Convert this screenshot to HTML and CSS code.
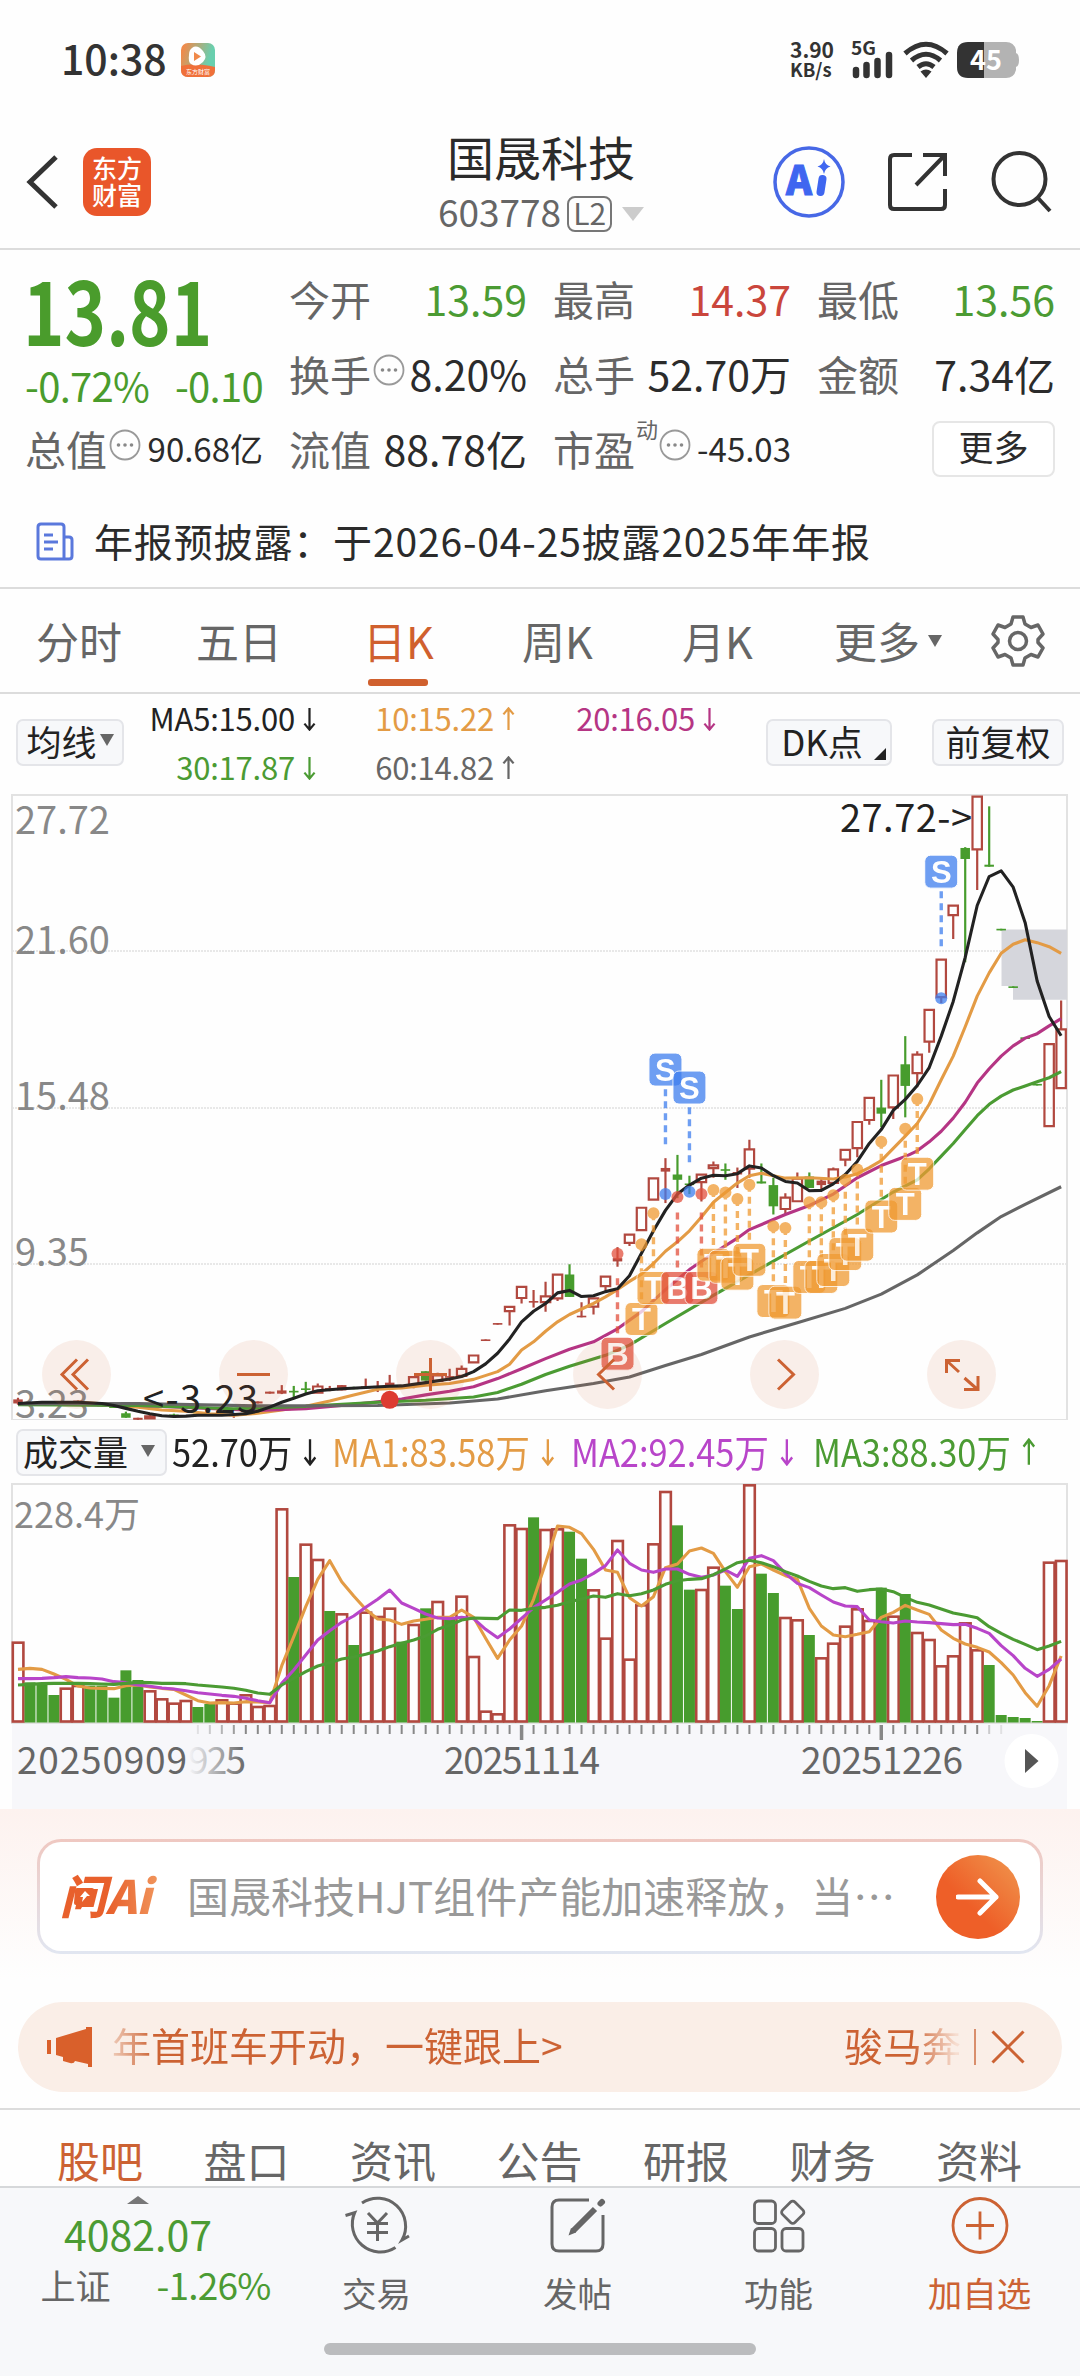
FILE: index.html
```html
<!DOCTYPE html>
<html lang="zh-CN">
<head>
    <meta charset="UTF-8">
    <title>国晟科技 603778</title>
    <link rel="stylesheet" href="styles.css">
</head>
<body>

<svg class="defs">
    <symbol id="down" viewBox="0 0 14 26"><path d="M7 1V24M1.500 18L7 24.500L12.500 18" fill="none" stroke="currentColor" stroke-width="2.400"/></symbol>
    <symbol id="up" viewBox="0 0 14 26"><path d="M7 25V2M1.500 8L7 1.500L12.500 8" fill="none" stroke="currentColor" stroke-width="2.400"/></symbol>
    <symbol id="more" viewBox="0 0 32 32"><circle cx="16" cy="16" r="14.500" fill="none" stroke="#999" stroke-width="1.800"/><circle cx="9.500" cy="16" r="1.800" fill="#888"/><circle cx="16" cy="16" r="1.800" fill="#888"/><circle cx="22.500" cy="16" r="1.800" fill="#888"/></symbol>
</svg>

<div class="status">
    <span class="clock">10:38</span>
    <svg class="app-badge" width="36" height="36" viewBox="0 0 36 36">
        <defs><linearGradient id="badge" x1="0" y1="0" x2="1" y2="0.3"><stop offset="0.1" stop-color="#f08a4b"/><stop offset="0.9" stop-color="#69cfae"/></linearGradient></defs>
        <rect x="1" y="1" width="34" height="34" rx="7" fill="url(#badge)"/>
        <path d="M1 24Q14 20 35 25V28Q35 35 28 35H8Q1 35 1 28Z" fill="#f0703a"/>
        <path d="M12 6Q17 2 23 9Q28 15 23 20Q17 26 11 22Q8 20 9 13Q9 8 12 6Z" fill="#fff"/>
        <path d="M14 10L21 14.500L14 19Z" fill="#f08a4b"/>
        <text x="18" y="32" font-size="6" text-anchor="middle" fill="#fff">东方财富</text>
    </svg>
    <div class="net"><span>3.90</span><span>KB/s</span></div>
    <svg class="signal" width="44" height="38" viewBox="0 0 44 38">
        <text x="0" y="14" font-size="18" font-weight="700" fill="#333" textLength="25" lengthAdjust="spacingAndGlyphs">5G</text>
        <path d="M5 29V34M15.500 24V34M26.500 20V34M38 14V34" stroke="#333" stroke-width="6.500" stroke-linecap="round"/>
    </svg>
    <svg class="wifi" width="46" height="38" viewBox="0 0 46 38">
        <path d="M2 12.500Q23 -6 44 12.500M8.500 19.500Q23 7 37.500 19.500M15 26Q23 19.500 31 26" fill="none" stroke="#333" stroke-width="5"/>
        <path d="M17.500 30.500Q23 26.500 28.500 30.500L23 37Z" fill="#333"/>
    </svg>
    <svg class="battery" width="64" height="38" viewBox="0 0 64 38">
        <path d="M28 1H50Q58 1 60 9V12Q63 13 63 19Q63 25 60 26V29Q58 37 50 37H28Z" fill="#b3b3b3"/>
        <path d="M28 1H12Q1 1 1 12V26Q1 37 12 37H28Z" fill="#333"/>
        <text x="30" y="29" font-size="27" font-weight="700" text-anchor="middle" fill="#fff">45</text>
    </svg>
</div>

<header class="header">
    <svg class="back" width="34" height="60" viewBox="0 0 34 60"><path d="M30 5L4 30L30 55" fill="none" stroke="#333" stroke-width="5"/></svg>
    <div class="logo">东方<br>财富</div>
    <div class="title">
        <h1>国晟科技</h1>
        <div class="code"><span>603778</span><b>L2</b><i class="tri"></i></div>
    </div>
    <div class="actions">
        <svg width="74" height="74" viewBox="0 0 74 74">
            <circle cx="37" cy="37" r="34" fill="none" stroke="#4768e6" stroke-width="3.500"/>
            <text x="14" y="50" font-size="40" font-weight="900" fill="#3f66f0" stroke="#3f66f0" textLength="26" lengthAdjust="spacingAndGlyphs">A</text>
            <path d="M50.500 34L48.500 47" stroke="#3f66f0" stroke-width="8" stroke-linecap="round"/>
            <path d="M52 14Q53 20 58.500 21.500Q53 23 52 29Q51 23 45.500 21.500Q51 20 52 14Z" fill="#3f66f0"/>
        </svg>
        <svg class="share" width="60" height="60" viewBox="0 0 60 60"><path d="M24 3H6Q2 3 2 7V53Q2 57 6 57H53Q57 57 57 53V37M35 3H57V24M57 3L28 33" fill="none" stroke="#333" stroke-width="4"/></svg>
        <svg class="search" width="62" height="62" viewBox="0 0 62 62"><circle cx="28.500" cy="28" r="26" fill="none" stroke="#333" stroke-width="4"/><path d="M47 47L59 60" stroke="#333" stroke-width="4"/></svg>
    </div>
</header>

<section class="quote">
    <div class="price-box">
        <div class="price">13.81</div>
        <div class="change"><span>-0.72%</span><span>-0.10</span></div>
    </div>
    <div class="cell"><label>今开</label><em class="green">13.59</em></div>
    <div class="cell"><label>最高</label><em class="red">14.37</em></div>
    <div class="cell"><label>最低</label><em class="green">13.56</em></div>
    <div class="cell"><label>换手</label><svg class="dots"><use href="#more"/></svg><em>8.20%</em></div>
    <div class="cell"><label>总手</label><em>52.70万</em></div>
    <div class="cell"><label>金额</label><em>7.34亿</em></div>
    <div class="cell"><label>总值</label><svg class="dots"><use href="#more"/></svg><em class="small">90.68亿</em></div>
    <div class="cell"><label>流值</label><em>88.78亿</em></div>
    <div class="cell pe"><label>市盈<sup>动</sup></label><svg class="dots"><use href="#more"/></svg><em class="small">-45.03</em></div>
    <div class="cell"><button class="more-btn">更多</button></div>
</section>

<div class="notice">
    <svg width="38" height="40" viewBox="0 0 38 40"><path d="M2 5Q2 2 5 2H25Q28 2 28 5V37H5Q2 37 2 34ZM28 15H33Q36 15 36 18V34Q36 37 33 37H28" fill="none" stroke="#5a78dc" stroke-width="3"/><path d="M8 13H17M8 20H22M8 27H17" stroke="#5a78dc" stroke-width="3"/></svg>
    <span>年报预披露：于2026-04-25披露2025年年报</span>
</div>

<nav class="period">
    <a class="p1">分时</a>
    <a class="p2">五日</a>
    <a class="p3 active">日K</a>
    <a class="p4">周K</a>
    <a class="p5">月K</a>
    <a class="p6">更多<i class="tri"></i></a>
    <svg class="gear" width="54" height="54" viewBox="0 0 54 54"><path d="M22 3H32L34 10L40 13.500L47 11L52 20L47 25.500V28.500L52 34L47 43L40 40.500L34 44L32 51H22L20 44L14 40.500L7 43L2 34L7 28.500V25.500L2 20L7 11L14 13.500L20 10Z" fill="none" stroke="#666" stroke-width="3.500" stroke-linejoin="round"/><circle cx="27" cy="27" r="8.500" fill="none" stroke="#666" stroke-width="3.500"/></svg>
</nav>

<section class="ma-bar">
    <button class="chip ma-chip">均线<i class="tri"></i></button>
    <div class="ma-list">
        <span class="c-black">MA5:15.00<svg class="arrow"><use href="#down"/></svg></span>
        <span class="c-orange">10:15.22<svg class="arrow"><use href="#up"/></svg></span>
        <span class="c-pink">20:16.05<svg class="arrow"><use href="#down"/></svg></span>
        <span class="c-green">30:17.87<svg class="arrow"><use href="#down"/></svg></span>
        <span class="c-gray">60:14.82<svg class="arrow"><use href="#up"/></svg></span>
    </div>
    <button class="chip dk-chip">DK点<i class="corner"></i></button>
    <button class="chip fq-chip">前复权</button>
</section>

<section class="k-chart">
    <svg id="kline" width="1080" height="630" viewBox="0 0 1080 630"></svg>
    <div class="controls">
        <button><svg viewBox="0 0 69 69"><path d="M35 19.500L20 34.500L35 49.500M46 19.500L31 34.500L46 49.500"/></svg></button>
        <button><svg viewBox="0 0 69 69"><path d="M18 34.500H51"/></svg></button>
        <button><svg viewBox="0 0 69 69"><path d="M18 34.500H51M34.500 18V51"/></svg></button>
        <button><svg viewBox="0 0 69 69"><path d="M41 19.500L25.500 34.500L41 49.500"/></svg></button>
        <button><svg viewBox="0 0 69 69"><path d="M28 19.500L43.500 34.500L28 49.500"/></svg></button>
        <button><svg viewBox="0 0 69 69"><path d="M19.500 33V20.500H33M20 21L32 32M51 36V49.500H37M50 49L37.500 38"/></svg></button>
    </div>
</section>

<section class="vol-bar">
    <button class="chip vol-chip">成交量<i class="tri"></i></button>
    <span class="c-black">52.70万<svg class="arrow"><use href="#down"/></svg></span>
    <span class="c-orange">MA1:83.58万<svg class="arrow"><use href="#down"/></svg></span>
    <span class="c-purple">MA2:92.45万<svg class="arrow"><use href="#down"/></svg></span>
    <span class="c-green">MA3:88.30万<svg class="arrow"><use href="#up"/></svg></span>
</section>

<svg id="volume" width="1080" height="326" viewBox="0 0 1080 326"></svg>

<section class="ask">
    <div class="ask-box">
        <div class="ask-logo">
            <span>问Ai</span>
            <svg width="22" height="22" viewBox="0 0 22 22"><path d="M4 1H19Q21 1 21 3L19 16Q19 18 17 18H11L8 21V18H3Q1 18 1 16L2 3Q2 1 4 1Z" fill="#e8602c"/><path d="M12 4L17 9H14L9 15L10 10H7Z" fill="#fff"/></svg>
        </div>
        <span class="ask-text">国晟科技HJT组件产能加速释放，当…</span>
        <button class="ask-go"><svg width="44" height="40" viewBox="0 0 44 40"><path d="M2 20H40M24 4L40 20L24 36" fill="none" stroke="#fff" stroke-width="5" stroke-linecap="round" stroke-linejoin="round"/></svg></button>
    </div>
</section>

<section class="promo">
    <svg width="46" height="40" viewBox="0 0 46 40"><path d="M2 13V27" stroke="#d9602b" stroke-width="4"/><path d="M9 11L39 2V0H45V40H41V37L28 34Q27 37 23 36L16 34V30L9 28Z" fill="#d9602b"/></svg>
    <span class="promo-a">年首班车开动，一键跟上&gt;</span>
    <span class="promo-b">骏马奔</span>
    <i class="bar"></i>
    <svg class="close" width="34" height="34" viewBox="0 0 34 34"><path d="M1.500 1.500L32.500 32.500M32.500 1.500L1.500 32.500" stroke="#cc6233" stroke-width="3"/></svg>
</section>

<nav class="info-tabs">
    <a class="active">股吧</a><a>盘口</a><a>资讯</a><a>公告</a><a>研报</a><a>财务</a><a>资料</a>
</nav>

<footer class="footer">
    <div class="index">
        <i class="tri-up"></i>
        <strong>4082.07</strong>
        <div class="index-row"><span>上证</span><em>-1.26%</em></div>
    </div>
    <a class="tool"><svg viewBox="0 0 64 60"><path d="M17 8A28 28 0 0 1 57 45L64 41M50.500 52.500A28 28 0 0 1 9.700 17.700L0.500 20.500" fill="none" stroke="#666" stroke-width="3"/><path d="M23 18L32.500 28L42 18M22 28.500H43M22 37.500H43M32.500 28V46" fill="none" stroke="#666" stroke-width="3"/></svg><span>交易</span></a>
    <a class="tool"><svg viewBox="0 0 64 60"><path d="M43 5H13Q6 5 6 12V49Q6 56 13 56H50Q57 56 57 49V20" fill="none" stroke="#666" stroke-width="3"/><path d="M49 14L27 36" stroke="#666" stroke-width="6"/><path d="M54.500 8.500L56 7" stroke="#666" stroke-width="6" stroke-linecap="round"/><path d="M22.500 40.500L25 33L30 37.500Z" fill="#666"/></svg><span>发帖</span></a>
    <a class="tool"><svg viewBox="0 0 64 60"><g fill="none" stroke="#666" stroke-width="2.800"><rect x="7.500" y="6" width="21" height="22.500" rx="4"/><rect x="7.500" y="33.500" width="21" height="22.500" rx="4"/><rect x="35" y="33.500" width="21" height="22.500" rx="4"/><rect x="37" y="8.500" width="17.500" height="17.500" rx="3" transform="rotate(45 45.750 17.250)"/></g></svg><span>功能</span></a>
    <a class="tool active"><svg viewBox="0 0 64 60"><circle cx="32" cy="30.500" r="27" fill="none" stroke="#cc6233" stroke-width="2.800"/><path d="M18 30.500H46M32 16.500V44.500" stroke="#cc6233" stroke-width="2.800"/></svg><span>加自选</span></a>
    <i class="home"></i>
</footer>

<script src="chart.js"></script>
</body>
</html>
```

FILE: styles.css
```css
* {
    box-sizing: border-box;
}

body {
    margin: 0;
    width: 1080px;
    height: 2376px;
    overflow: hidden;
    background: #fefefe;
    color: #2b2b2b;
    font-family: "Noto Sans CJK SC", "Noto Sans", sans-serif;
    font-size: 41px;
    line-height: 1;
    white-space: nowrap;
}

h1, button {
    margin: 0;
    padding: 0;
    font: inherit;
    color: inherit;
}

i, em {
    font-style: normal;
}

svg {
    display: block;
    flex: none;
}

.defs {
    position: absolute;
    width: 0;
    height: 0;
}

.green, .c-green { color: #4b9b33; }
.red { color: #ca463c; }
.c-black { color: #222; }
.c-orange { color: #e39b45; }
.c-pink { color: #b53584; }
.c-purple { color: #b845c9; }
.c-gray { color: #666; }

.tri {
    border: 7px solid transparent;
    border-top: 12px solid #666;
    border-bottom: 0;
}

/* status bar */
.status {
    display: flex;
    align-items: center;
    height: 100px;
    padding: 20px 60px 0 61px;
    color: #333;
}

.clock {
    width: 119px;
    font-weight: 500;
    margin-top: -6px;
}

.net {
    display: flex;
    flex-direction: column;
    width: 50px;
    margin-left: auto;
    font-size: 21px;
    font-weight: 700;
    line-height: 20px;
    padding-bottom: 3px;
}

.net span + span {
    font-size: 18.500px;
}

.signal {
    margin-left: 11px;
    overflow: visible;
}

.wifi {
    margin-left: 8px;
}

.battery {
    margin-left: 7px;
}

/* header */
.header {
    display: grid;
    grid-template-columns: 83px 220px 1fr 303px;
    height: 150px;
    align-items: center;
    border-bottom: 2px solid #dcdcdc;
}

.back {
    margin: 15px 0 0 26px;
}

.logo {
    width: 68px;
    height: 68px;
    margin-top: 15px;
    padding-top: 6px;
    border-radius: 14px;
    background: #e9562a;
    color: #fff;
    font-size: 25px;
    font-weight: 500;
    line-height: 27px;
    text-align: center;
}

.title {
    display: flex;
    flex-direction: column;
    align-items: center;
    margin-left: 2px;
}

.title h1 {
    font-size: 47px;
    padding-top: 15px;
}

.code {
    display: flex;
    align-items: center;
    margin-top: 17px;
    color: #666;
    font-size: 37px;
}

.code span {
    margin-top: -4px;
}

.code b {
    height: 36px;
    margin: 0 10px 0 6px;
    padding: 0 4px;
    border: 2px solid #777;
    border-radius: 8px;
    font-size: 30px;
    font-weight: 400;
    line-height: 29px;
}

.code .tri {
    border-width: 14px 11px 0;
    border-top-color: #ccc;
}

.actions {
    display: flex;
    align-items: center;
    margin-top: 15px;
    margin-left: -5px;
}

.share {
    margin-left: 42px;
}

.search {
    margin-left: 43px;
}

/* quote */
.quote {
    display: grid;
    grid-template-columns: repeat(4, 237px);
    grid-template-rows: 75px 75px 75px;
    column-gap: 27px;
    height: 249px;
    padding: 11px 0 0 26px;
}

.price-box {
    grid-row: 1 / 3;
    color: #4a9c2c;
}

.price {
    height: 94px;
    padding-top: 4px;
    font-size: 87px;
    font-weight: 700;
    transform: scaleX(0.810);
    transform-origin: 0 50%;
    margin-left: -3px;
}

.change {
    display: flex;
    justify-content: space-between;
    padding-top: 10px;
    margin-left: -1px;
    font-size: 40px;
    letter-spacing: -0.700px;
}

.cell {
    position: relative;
    display: flex;
    align-items: center;
    height: 75px;
}

.cell label {
    margin-left: -1px;
    color: #666;
}

.cell em {
    margin-left: auto;
}

.cell .small {
    font-size: 33px;
}

.cell sup {
    position: absolute;
    top: 6px;
    left: 82px;
    font-size: 22px;
}

.dots {
    width: 32px;
    height: 32px;
    margin: -8px 0 0 2px;
}

.pe .dots {
    margin-left: 24px;
}

.more-btn {
    width: 123px;
    height: 56px;
    margin-left: auto;
    padding-bottom: 6px;
    border: 2px solid #e6e6e6;
    border-radius: 8px;
    background: #fff;
    font-size: 35px;
}

/* notice */
.notice {
    display: flex;
    align-items: center;
    gap: 20px;
    height: 90px;
    padding: 0 0 2px 36px;
    border-bottom: 2px solid #dcdcdc;
    font-size: 39px;
    letter-spacing: 0.850px;
}

.notice span {
    margin-top: -3px;
}

/* period tabs */
.period {
    display: grid;
    grid-template-columns: 160px 167px 159px 160px 152px 156px 1fr;
    align-items: center;
    height: 105px;
    padding-left: 36px;
    border-bottom: 2px solid #dcdcdc;
    color: #666;
    font-size: 43px;
}

.period a {
    display: flex;
    flex-direction: column;
    align-items: flex-start;
}

.period .active {
    color: #d0602e;
}

.period .active::after {
    content: "";
    width: 60px;
    height: 7px;
    margin: 17px 0 -24px 5px;
    border-radius: 3px;
    background: #d0602e;
}

.period .p6 {
    flex-direction: row;
    align-items: center;
}

.p6 .tri {
    margin-left: 8px;
}

.gear {
    margin-left: 1px;
}

/* moving average row */
.ma-bar {
    display: flex;
    align-items: center;
    height: 96px;
    padding: 0 16px;
}

.chip {
    position: relative;
    display: flex;
    align-items: center;
    justify-content: center;
    height: 47px;
    padding-bottom: 4px;
    border: 2px solid #e4e5e9;
    border-radius: 7px;
    background: #f7f8fa;
    color: #222;
    font-size: 35px;
}

.ma-chip {
    width: 108px;
    gap: 3px;
}

.ma-list {
    display: grid;
    grid-template-columns: 172px 199px 201px;
    grid-template-rows: 49px 49px;
    justify-items: end;
    align-items: center;
    width: 592px;
    margin-left: 20px;
    font-size: 31px;
    letter-spacing: -0.200px;
}

.ma-list span {
    display: flex;
    align-items: center;
}

.arrow {
    width: 13px;
    height: 24px;
    margin-left: 8px;
    margin-top: 3px;
}

.dk-chip {
    width: 126px;
    margin-left: 30px;
    padding-right: 14px;
}

.corner {
    position: absolute;
    right: 4px;
    bottom: 4px;
    border-left: 12px solid transparent;
    border-bottom: 12px solid #222;
}

.fq-chip {
    width: 132px;
    margin-left: auto;
}

/* k line */
.k-chart {
    position: relative;
    height: 630px;
}

.controls {
    position: absolute;
    left: 42px;
    top: 550px;
    display: flex;
    gap: 108px;
}

.controls button {
    width: 69px;
    height: 69px;
    border: 0;
    border-radius: 50%;
    background: rgba(210, 96, 46, 0.1);
}

.controls path {
    fill: none;
    stroke: #cc6233;
    stroke-width: 3;
}

.k-label {
    font-size: 38px;
    fill: #888;
}

.k-label.dark {
    fill: #222;
}

.mark {
    font-family: "Liberation Sans", Arial, sans-serif;
    font-size: 31px;
    font-weight: 700;
    text-anchor: middle;
    fill: #fff;
}

/* volume header */
.vol-bar {
    display: grid;
    grid-template-columns: 156px 160px 239px 242px 1fr;
    align-items: center;
    height: 63px;
    padding: 2px 0 0 16px;
}

.vol-bar span {
    display: flex;
    align-items: center;
    margin-top: -4px;
    font-size: 38px;
    transform: scaleX(0.905);
    transform-origin: 0 50%;
}

.vol-bar .arrow {
    width: 15px;
    height: 28px;
    margin-left: 12px;
}

.vol-chip {
    width: 151px;
    gap: 13px;
    padding-right: 5px;
}

.vol-label {
    font-size: 36px;
    fill: #888;
}

.date {
    font-size: 37px;
    fill: #666;
}

/* ask box */
.ask {
    height: 193px;
    padding: 30px 37px 0;
    background: linear-gradient(#fdf2ef, #fefefe 88%);
}

.ask-box {
    display: flex;
    align-items: center;
    height: 115px;
    padding: 0 20px;
    border: 3px solid transparent;
    border-radius: 24px;
    background: linear-gradient(#fff, #fff) padding-box, linear-gradient(#efc8c1, #e1e6f1) border-box;
}

.ask-logo {
    position: relative;
    width: 127px;
    padding-bottom: 5px;
}

.ask-logo span {
    padding-right: 6px;
    font-size: 46px;
    font-weight: 900;
    font-style: italic;
    background: linear-gradient(90deg, #e8602c 50%, #f0935a);
    -webkit-background-clip: text;
    background-clip: text;
    color: transparent;
}

.ask-logo svg {
    position: absolute;
    left: 13px;
    top: 16px;
}

.ask-text {
    padding-bottom: 4px;
    font-size: 42px;
    color: #999;
}

.ask-go {
    display: flex;
    align-items: center;
    justify-content: center;
    width: 84px;
    height: 84px;
    margin-left: auto;
    border: 0;
    border-radius: 50%;
    background: linear-gradient(45deg, #ee5f28 40%, #f0984f);
}

/* promo */
.promo {
    display: flex;
    align-items: center;
    width: 1044px;
    height: 90px;
    margin: 0 18px 16px;
    padding-left: 29px;
    border-radius: 45px;
    background: #faeee7;
    color: #cc6233;
    font-size: 39px;
}

.promo span {
    padding-bottom: 6px;
    -webkit-background-clip: text;
    background-clip: text;
    color: transparent;
}

.promo-a {
    width: 732px;
    margin-left: 19px;
    background-image: linear-gradient(90deg, #eecab7, #cc6233 42px);
}

.promo-b {
    width: 117px;
    background-image: linear-gradient(90deg, #cc6233 68px, #f6ddd0 112px);
}

.bar {
    width: 2px;
    height: 36px;
    margin-left: 13px;
    background: #d98e6c;
}

.close {
    margin-left: 15px;
}

/* bottom tabs */
.info-tabs {
    display: flex;
    gap: 60.500px;
    height: 78px;
    padding: 28px 0 0 57px;
    border-top: 2px solid #dcdcdc;
    color: #666;
    font-size: 43px;
}

.info-tabs .active {
    color: #cc6233;
}

/* footer */
.footer {
    position: relative;
    display: flex;
    height: 190px;
    border-top: 2px solid #d6d8da;
    background: #f7f8fa;
    color: #666;
}

.index {
    display: flex;
    flex-direction: column;
    align-items: center;
    width: 276px;
}

.tri-up {
    margin-top: 8px;
    border: 11px solid transparent;
    border-bottom: 8px solid #777;
    border-top: 0;
}

.index strong {
    margin-top: 9px;
    font-weight: 400;
    color: #4b9b33;
}

.index-row {
    display: flex;
    align-items: center;
    justify-content: space-between;
    width: 230px;
    margin: 12px 0 0 35px;
    font-size: 35px;
}

.index-row em {
    font-size: 37px;
    letter-spacing: -0.800px;
    color: #4b9b33;
}

.tool {
    display: flex;
    flex-direction: column;
    align-items: center;
    width: 201px;
    padding-top: 7px;
    font-size: 34.500px;
}

.tool svg {
    width: 64px;
    height: 60px;
    margin-bottom: 20px;
    overflow: visible;
}

.tool.active {
    color: #cc6233;
}

.home {
    position: absolute;
    left: 324px;
    bottom: 21px;
    width: 432px;
    height: 12px;
    border-radius: 6px;
    background: #bbbcbe;
}
```

FILE: chart.js
```js
// bar n is centred at 18 + 12n; heights are stored in thirds (volume) or 1/2.45 px (price)
const X = n => 18 + 11.99 * n;
const P = v => v / 2.45;
const V = v => v / 3 - 63;
const RED = '#b1483f', GREEN = '#479c2d';

// [bar, type, high, top, bottom, low]; h hollow red, r red, g green
const candles = [
    [0,'r',1489,1493,1503,1506],[1,'g',1500,1500,1504,1504],[3,'r',1498,1498,1502,1502],[5,'r',1496,1496,1500,1500],
    [7,'g',1506,1506,1510,1510],[8,'g',1509,1509,1514,1514],[9,'g',1523,1527,1538,1538],[10,'r',1538,1538,1543,1546],
    [11,'h',1528,1532,1542,1542],[13,'g',1528,1530,1534,1536],[15,'g',1526,1528,1532,1534],[18,'r',1526,1528,1534,1538],
    [20,'r',1498,1498,1503,1503],[21,'r',1474,1474,1479,1479],[22,'r',1458,1471,1479,1480],[23,'g',1460,1472,1476,1488],
    [24,'g',1450,1466,1470,1480],[25,'h',1454,1459,1479,1479],[26,'r',1460,1465,1469,1473],[27,'r',1458,1458,1471,1471],
    [28,'g',1462,1463,1468,1468],[29,'r',1442,1461,1466,1466],[30,'r',1448,1460,1464,1475],[31,'r',1433,1452,1460,1462],
    [32,'r',1462,1462,1467,1467],[33,'h',1436,1436,1462,1466],[34,'g',1424,1424,1447,1447],[35,'h',1428,1432,1450,1450],
    [36,'r',1418,1436,1440,1448],[37,'h',1410,1416,1438,1438],[38,'h',1383,1383,1405,1405],[39,'r',1346,1346,1350,1350],
    [40,'r',1306,1306,1310,1310],[41,'h',1264,1264,1279,1312],[42,'h',1215,1215,1247,1258],[43,'r',1225,1252,1256,1268],
    [44,'h',1205,1238,1257,1278],[45,'h',1185,1185,1248,1252],[46,'g',1162,1187,1242,1242],[47,'r',1255,1288,1292,1292],
    [48,'h',1243,1243,1268,1285],[49,'h',1190,1190,1218,1230],[50,'r',1120,1147,1155,1168],[51,'h',1087,1087,1112,1117],
    [52,'h',1021,1021,1081,1081],[53,'h',949,949,1006,1006],[54,'r',902,926,935,1012],[55,'g',894,942,955,1000],
    [56,'g',945,964,968,990],[57,'h',940,940,963,1008],[58,'h',910,917,929,950],[59,'g',915,929,933,955],
    [60,'r',925,936,942,975],[61,'h',857,878,930,950],[62,'g',915,959,964,964],[63,'g',950,968,1020,1040],
    [64,'h',988,996,1029,1040],[65,'h',937,950,1010,1010],[66,'g',937,947,975,975],[67,'r',950,957,968,980],
    [68,'h',925,927,965,965],[69,'h',879,879,908,922],[70,'h',811,811,880,900],[71,'h',752,752,811,820],
    [72,'g',710,778,793,826],[73,'h',697,697,780,806],[74,'g',603,672,725,802],[75,'h',640,646,696,728],
    [76,'h',536,536,619,644],[77,'h',413,413,510,522],[78,'h',281,281,309,365],[79,'g',140,142,169,422],
    [80,'h',14,14,148,245],[81,'g',40,183,188,188],[82,'g',340,340,344,344],[83,'g',481,481,485,485],
    [84,'g',606,606,610,610],[85,'g',720,720,724,724],[86,'h',620,620,826,826],[87,'h',516,584,733,733]
];

const ma = {
    '#e39b45': '5,1500 7,1504 10,1512 12,1519 14,1522 16,1528 18,1532 20,1527 22,1519 24,1510 26,1497 28,1482 30,1468 32,1465 34,1458 36,1454 38,1444 40,1425 41,1407 42,1372 43,1352 44,1326 45,1303 46,1285 48,1258 49,1242 50,1224 51,1204 52,1186 53,1160 54,1130 55,1107 56,1080 57,1046 58,1010 59,986 60,963 61,945 62,939 63,945 64,951 66,950 68,953 69,948 70,940 71,925 72,908 73,878 74,848 75,817 76,770 77,710 78,652 79,580 80,505 81,448 82,400 83,378 84,367 85,374 86,384 87,400',
    '#b53584': '0,1504 10,1508 20,1520 24,1516 27,1508 30,1499 32,1492 34,1482 36,1473 38,1462 40,1442 42,1418 44,1393 46,1370 48,1352 50,1320 52,1278 54,1224 56,1175 58,1135 60,1098 61,1077 64,1040 66,1018 68,990 70,950 72,920 74,898 75,884 76,862 77,836 78,804 79,765 80,718 81,683 82,652 83,627 84,608 85,597 86,578 87,560',
    '#4b9b33': '0,1506 10,1508 18,1516 24,1510 30,1500 34,1495 38,1487 40,1476 42,1456 44,1432 46,1412 49,1385 51,1360 54,1307 58,1238 62,1171 66,1105 70,1040 73,985 75,955 76,928 77,897 78,866 79,832 80,798 81,770 82,750 83,735 84,725 85,715 86,705 87,690',
    '#666': '0,1504 10,1503 20,1509 30,1508 36,1502 40,1492 44,1472 48,1454 51,1438 54,1410 57,1383 61,1340 65,1305 69,1270 72,1235 75,1188 78,1128 80,1085 82,1045 84,1015 87,972',
    '#222': '0,1503 2,1500 5,1500 7,1503 8,1508 9,1515 10,1522 11,1528 12,1533 13,1535 14,1534 15,1532 17,1532 19,1528 20,1522 21,1512 22,1500 23,1490 24,1480 25,1472 27,1467 31,1461 32,1460 34,1452 36,1443 37,1437 38,1425 39,1406 40,1380 41,1345 42,1303 43,1277 44,1258 45,1232 46,1226 47,1241 48,1239 49,1229 50,1222 51,1190 52,1135 53,1080 54,1030 55,990 56,968 57,951 58,944 59,945 60,940 61,921 62,926 63,945 64,959 65,963 66,982 67,981 68,965 69,942 70,910 71,866 72,832 73,785 74,758 75,724 76,680 77,603 78,518 79,410 80,283 81,212 82,198 83,238 84,325 85,468 86,555 87,602'
};

// trade marks: [letter, bar, dot, badge]
const marks = [
    ['B',50,1136,1381],['T',52,1113,1296],['T',53,1037,1220],['S',54,990,685],['B',55,997,1220],['S',56,984,729],
    ['B',57,990,1220],['T',58,980,1163],['T',59,986,1168],['T',60,1002,1185],['T',61,967,1151],['T',63,1069,1252],
    ['T',64,1073,1256],['T',66,1010,1193],['T',67,1010,1193],['T',68,993,1176],['T',69,955,1137],['T',70,930,1114],
    ['T',72,862,1045],['T',74,830,1014],['T',75,757,940],['S',77,510,200]
];
const markColor = { B: '#e2503d', T: '#f09a32', S: '#3f7eee' };

const volumes = 'r665 g787 g792 g825 r803 r795 g797 g797 g833 g751 g780 r811 r835 r848 r840 g861 g852 r838 r848 r823 r858 r855 r265 g471 r371 r417 g573 r580 g675 r575 r588 r563 g665 r612 g565 r543 g597 r527 r708 r872 r880 r313 r324 g292 r327 r325 g335 g416 r508 r653 r360 r716 r553 r370 r213 g316 g509 r507 r440 g497 g567 r193 g461 g519 r591 r598 g645 r712 r668 r617 r565 r600 g503 r587 g522 r636 r657 r736 r706 r607 r688 g735 g885 g891 g894 g903 r425 r420'.split(' ');

const volMa = {
    '#e39b45': '748 745 748 762 778 798 804 805 806 797 795 801 805 808 825 842 849 848 849 845 846 848 737 650 560 478 422 485 528 568 597 600 613 603 598 592 592 570 592 655 715 660 618 538 430 318 322 341 388 450 457 533 558 530 443 432 393 384 400 455 502 440 432 450 467 478 565 618 645 650 643 635 592 577 556 570 583 630 655 672 682 696 728 765 818 859 797 708',
    '#b845c9': '776 776 775 773 770 773 774 777 785 788 795 799 804 807 812 818 822 826 829 835 842 848 790 750 705 660 632 607 588 562 538 510 549 565 582 594 596 592 596 628 653 627 595 563 540 517 492 480 460 437 390 430 450 457 447 447 463 472 465 450 469 415 407 422 460 490 503 525 546 558 560 600 605 609 603 606 608 611 614 613 625 640 677 707 745 769 748 717',
    '#4b9b33': '795 793 791 790 790 790 791 792 793 790 787 788 790 790 791 795 798 801 805 811 819 823 795 775 755 738 728 717 711 703 693 680 670 660 648 628 616 600 594 595 596 570 571 565 562 556 545 537 528 532 521 527 521 510 493 482 478 476 464 447 428 421 428 440 455 468 484 498 506 503 514 509 507 515 532 547 555 567 579 586 593 620 640 658 673 689 678 664'
};

function line(points, color) {
    return `<polyline points="${points}" fill="none" stroke="${color}" stroke-width="3.1" stroke-linejoin="round"/>`;
}

function drawKline() {
    let s = '';
    for (const y of [161, 318, 474]) {
        s += `<path d="M12 ${y}H1067" stroke="#d2d2d2" stroke-dasharray="2 1"/>`;
    }
    s += '<path d="M12 5H1067V630H12Z" fill="none" stroke="#e2e2e2" stroke-width="2"/>';
    [['27.72', 44], ['21.60', 164], ['15.48', 320], ['9.35', 476], ['3.23', 628]].forEach(([t, y]) => {
        s += `<text class="k-label" x="15" y="${y}">${t}</text>`;
    });
    s += `<path d="M1001.5 ${P(342)}H1067V${P(514)}H1013V${P(480)}H1001.5Z" fill="#d5d6dc"/>`;

    for (const [n, type, hi, top, bot, lo] of candles) {
        const x = X(n), c = type === 'g' ? GREEN : RED;
        if (type === 'h') {
            s += `<path d="M${x} ${P(hi)}V${P(top)}M${x} ${P(bot)}V${P(lo)}M${x - 4.7} ${P(top) + 1}H${x + 4.7}V${P(bot) - 1}H${x - 4.7}Z" fill="none" stroke="${c}" stroke-width="2.2"/>`;
        } else {
            const w = 9.5;
            s += `<path d="M${x} ${P(hi)}V${P(lo)}" stroke="${c}" stroke-width="2.2"/><rect x="${x - w / 2}" y="${P(top)}" width="${w}" height="${P(bot) - P(top)}" fill="${c}"/>`;
        }
    }
    for (const c in ma) {
        s += line(ma[c].split(' ').map(p => {
            const [n, v] = p.split(',');
            return X(+n) + ',' + P(+v);
        }).join(' '), c);
    }
    s += `<circle cx="${X(31)}" cy="${P(1494)}" r="9" fill="#dd3b31"/>`;

    for (const [t, n, dot, box] of marks) {
        const x = X(n), c = markColor[t];
        const from = t === 'S' ? box + 48 : t === 'B' ? box - 185 : dot;
        const to = t === 'S' ? box + 186 : box - 42;
        s += `<g opacity="0.75"><path d="M${x} ${P(from)}V${P(to)}" stroke="${c}" stroke-width="3.4" stroke-dasharray="7 5"/>
            <circle cx="${x}" cy="${P(dot)}" r="6" fill="${c}"/>
            <rect x="${x - 16.5}" y="${P(box) - 16.5}" width="33" height="33" rx="6" fill="${c}" stroke="#fff" stroke-width="1"/>
            <text class="mark" x="${x}" y="${P(box) + 11}">${t}</text></g>`;
    }
    s += '<text class="k-label dark" x="143" y="623" textLength="115">&lt;-3.23</text>';
    s += '<text class="k-label dark" x="840" y="42" textLength="132">27.72-&gt;</text>';
    document.getElementById('kline').innerHTML = s;
}

function drawVolume() {
    let s = '<rect x="12" y="241" width="1055" height="85" fill="#f7f7fa"/>';
    s += '<path d="M12 1H1067V240H12Z" fill="none" stroke="#e2e2e2" stroke-width="2"/>';
    s += '<text class="vol-label" x="14" y="45">228.4万</text>';
    volumes.forEach((v, n) => {
        const x = X(n), y = V(+v.slice(1));
        if (v[0] === 'g') {
            s += `<rect x="${x - 5.5}" y="${y}" width="11" height="${239.5 - y}" fill="${GREEN}"/>`;
        } else {
            s += `<rect x="${x - 5.2}" y="${y + 1}" width="10.6" height="${237.5 - y}" fill="#fefefe" stroke="${RED}" stroke-width="2.6"/>`;
        }
    });
    for (const c in volMa) {
        s += line(volMa[c].split(' ').map((v, n) => X(n) + ',' + V(+v)).join(' '), c);
    }
    for (let n = 15; n <= 82; n++) {
        const major = n === 42 || n === 72;
        const fade = n < 19 ? (n - 14) / 5 : n > 80 ? (83 - n) / 5 : 1;
        s += `<path d="M${X(n)} 242V${major ? 257 : 251}" stroke="#888" stroke-width="${major ? 3.5 : 2}" opacity="${fade}"/>`;
    }
    s += `<defs><linearGradient id="fade"><stop offset="0" stop-color="#666" stop-opacity="0"/><stop offset="1" stop-color="#666"/></linearGradient></defs>
        <text class="date" x="17" y="291" textLength="170">20250909</text>
        <text x="188" y="291" font-size="37" fill="url(#fade)" textLength="58">925</text>
        <text class="date" x="444" y="291" textLength="156">20251114</text>
        <text class="date" x="801" y="291" textLength="162">20251226</text>
        <circle cx="1031.5" cy="278" r="27" fill="#fff"/><path d="M1025 266L1038.5 278L1025 290Z" fill="#555"/>`;
    document.getElementById('volume').innerHTML = s;
}

drawKline();
drawVolume();
```
